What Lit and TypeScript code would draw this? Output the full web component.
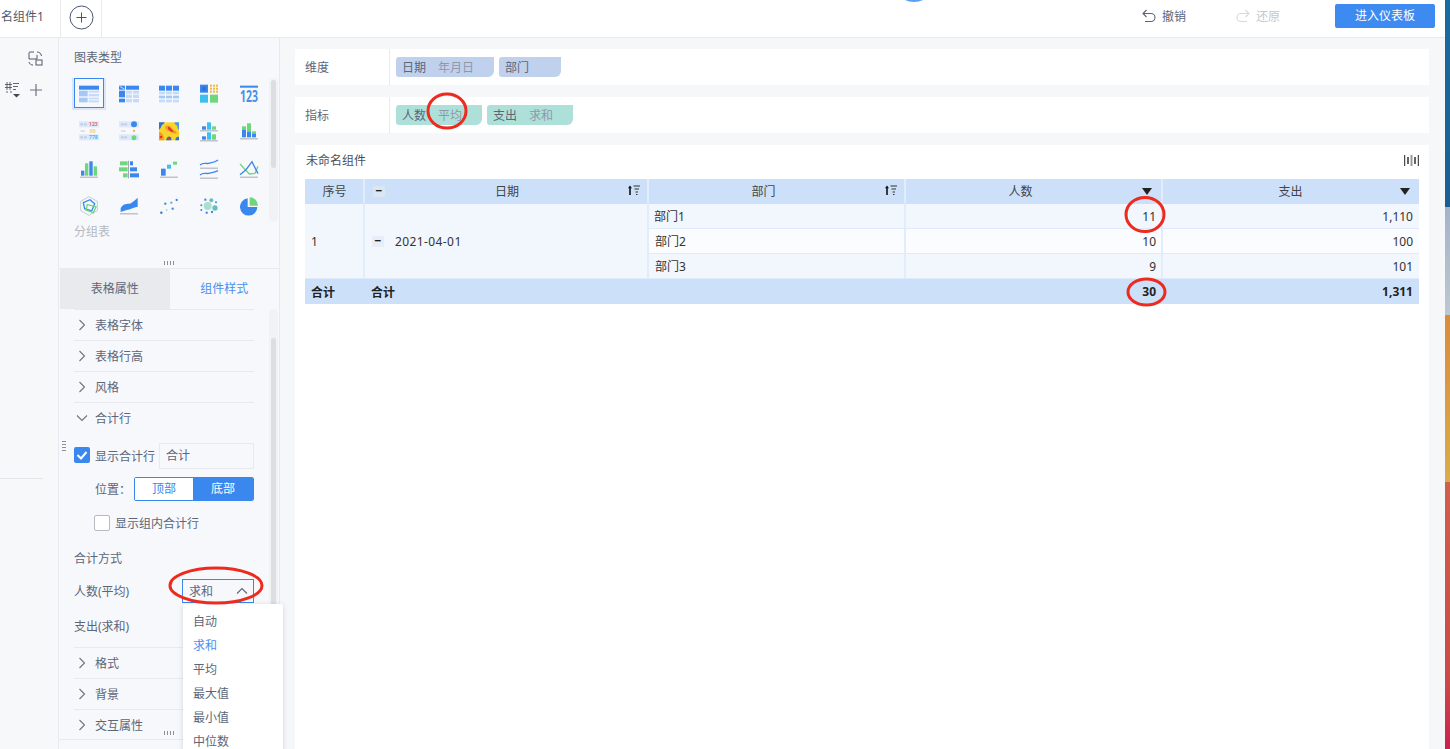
import { html, svg, css, LitElement } from "lit";
import { customElement } from "lit/decorators.js";

const BLUE = "#3a87ee";
const MID = "#a6c8f5";
const LIGHT = "#c5dbf9";
const GREEN = "#6fd67c";
const CYAN = "#3cc0f0";
const GRAY = "#a4a9b4";
const PALE = "#dce8fb";

// each icon is drawn in 60x60 units, x/y are the top left of its box
const chartIcons = [
  {
    x: 237, y: 250,
    body: svg`<rect x="237" y="255" width="60" height="12" fill=${BLUE}/>
      <rect x="237" y="270" width="26" height="17" fill=${MID}/><rect x="237" y="291" width="26" height="14" fill=${MID}/>
      <rect x="266" y="270" width="31" height="6" fill=${LIGHT}/><rect x="266" y="280" width="31" height="7" fill=${LIGHT}/>
      <rect x="266" y="291" width="31" height="5" fill=${LIGHT}/><rect x="266" y="299" width="31" height="6" fill=${LIGHT}/>`,
  },
  {
    x: 357, y: 250,
    body: svg`<rect x="357" y="255" width="18" height="12" fill=${BLUE}/><path d="M359 257 L373 265" stroke="#fff" stroke-width="2"/>
      <rect x="378" y="255" width="39" height="12" fill=${BLUE}/><rect x="357" y="270" width="18" height="20" fill=${BLUE}/><rect x="357" y="294" width="18" height="11" fill=${BLUE}/>
      <rect x="378" y="270" width="18" height="9" fill=${LIGHT}/><rect x="399" y="270" width="18" height="9" fill=${LIGHT}/>
      <rect x="378" y="282" width="18" height="10" fill=${LIGHT}/><rect x="399" y="282" width="18" height="10" fill=${LIGHT}/>
      <rect x="378" y="295" width="18" height="10" fill=${LIGHT}/><rect x="399" y="295" width="18" height="10" fill=${LIGHT}/>`,
  },
  {
    x: 477, y: 250,
    body: svg`${[477, 498, 519].map(
      (x) => svg`<rect x=${x} y="255" width="18" height="15" fill=${BLUE}/>
        <rect x=${x} y="273" width="18" height="8" fill=${LIGHT}/>
        <rect x=${x} y="285" width="18" height="8" fill=${MID}/>
        <rect x=${x} y="297" width="18" height="8" fill=${LIGHT}/>`
    )}`,
  },
  {
    x: 597, y: 250,
    body: svg`<rect x="600" y="252" width="24" height="24" fill=${BLUE}/><rect x="606" y="258" width="12" height="12" fill="#2d74d8"/>
      ${[630, 639, 648].map((x) =>
        [252, 261, 270].map((y) => svg`<rect x=${x} y=${y} width="6" height="6" fill="#f5b83c"/>`)
      )}
      <rect x="600" y="282" width="24" height="24" fill=${CYAN}/><rect x="630" y="282" width="24" height="24" fill=${GREEN}/>`,
  },
  {
    x: 717, y: 250,
    body: svg`<rect x="720" y="255" width="54" height="6" fill=${BLUE}/>
      <text x="720" y="304" font-size="46" font-weight="700" textLength="54" lengthAdjust="spacingAndGlyphs" fill="#4a8fe8">123</text>`,
  },
  {
    x: 237, y: 362,
    body: svg`<rect x="237" y="363" width="60" height="18" fill=${PALE}/><rect x="237" y="402" width="60" height="18" fill=${PALE}/>
      <rect x="241" y="369" width="8" height="6" fill="#c8ccd4"/><rect x="252" y="369" width="8" height="6" fill="#c8ccd4"/>
      <rect x="241" y="389" width="14" height="6" fill="#dfe1e6"/>
      <rect x="241" y="408" width="8" height="6" fill="#c8ccd4"/><rect x="252" y="408" width="8" height="6" fill="#c8ccd4"/>
      <text x="267" y="377" font-size="15" font-weight="700" textLength="26" fill="#ee6b6b">123</text>
      <text x="269" y="397" font-size="15" font-weight="700" textLength="18" fill="#f5cf7a">90</text>
      <text x="267" y="417" font-size="15" font-weight="700" textLength="26" fill=${CYAN}>778</text>`,
  },
  {
    x: 357, y: 362,
    body: svg`<rect x="357" y="363" width="60" height="18" fill=${PALE}/><rect x="357" y="402" width="60" height="18" fill=${PALE}/>
      <rect x="363" y="369" width="8" height="6" fill="#c8ccd4"/><rect x="373" y="369" width="8" height="6" fill="#c8ccd4"/>
      <rect x="363" y="389" width="14" height="6" fill="#dfe1e6"/>
      <rect x="363" y="408" width="8" height="6" fill="#c8ccd4"/><rect x="373" y="408" width="8" height="6" fill="#c8ccd4"/>
      <circle cx="402" cy="372" r="9" fill=${BLUE}/><circle cx="402" cy="392" r="3.5" fill="#f5b83c"/><circle cx="402" cy="412" r="7.5" fill=${GREEN}/>`,
  },
  {
    x: 477, y: 362,
    body: svg`<rect x="477" y="366" width="60" height="54" fill="#f8d52a"/>
      <path d="M477 366 H494 C492 372 486 371 484 378 C482 384 480 386 477 388 Z" fill="#2f6fd6"/>
      <path d="M524 366 H537 V388 C531 386 534 376 528 374 C525 373 524 370 524 366 Z" fill="#4c9ae0"/>
      <path d="M496 378 C504 372 514 378 518 386 C524 392 532 394 530 400 C522 402 512 396 506 392 C500 390 494 386 496 378 Z" fill="#f39a2a"/>
      <path d="M504 380 C508 378 510 384 516 388 C520 391 522 394 518 395 C512 394 502 388 504 380 Z" fill="#e5352b"/>
      <path d="M477 396 C484 394 492 402 492 420 H477 Z" fill="#f39a2a"/>
      <circle cx="483" cy="410" r="4" fill="#e5352b"/>
      <path d="M498 420 C500 410 506 406 512 410 C515 413 514 420 514 420 Z" fill="#2f6fd6"/>
      <circle cx="507" cy="415" r="3.5" fill="#e5352b"/>
      <path d="M526 420 C526 412 532 408 537 410 V420 Z" fill="#2f6fd6"/>`,
  },
  {
    x: 597, y: 362,
    body: svg`<rect x="606" y="378" width="12" height="10" fill=${BLUE}/><rect x="621" y="366" width="12" height="22" fill=${CYAN}/><rect x="636" y="378" width="12" height="10" fill=${GREEN}/>
      <rect x="600" y="390" width="54" height="3" fill=${GRAY}/>
      <rect x="606" y="408" width="12" height="10" fill=${BLUE}/><rect x="621" y="396" width="12" height="22" fill=${CYAN}/><rect x="636" y="402" width="12" height="16" fill=${GREEN}/>
      <rect x="600" y="420" width="54" height="3" fill=${GRAY}/>`,
  },
  {
    x: 717, y: 362,
    body: svg`<rect x="726" y="387" width="12" height="24" fill=${BLUE}/><rect x="726" y="378" width="12" height="9" fill=${GREEN}/>
      <rect x="741" y="393" width="12" height="18" fill=${BLUE}/><rect x="741" y="369" width="12" height="24" fill=${GREEN}/>
      <rect x="756" y="399" width="12" height="12" fill=${BLUE}/><rect x="756" y="393" width="12" height="6" fill=${GREEN}/>
      <rect x="720" y="414" width="54" height="3" fill=${GRAY}/>`,
  },
  {
    x: 237, y: 475,
    body: svg`<rect x="243" y="510" width="10" height="15" fill=${BLUE}/><rect x="255" y="488" width="10" height="37" fill=${GREEN}/>
      <rect x="268" y="482" width="10" height="43" fill=${BLUE}/><rect x="281" y="497" width="10" height="28" fill=${GREEN}/>
      <rect x="240" y="528" width="54" height="3" fill=${GRAY}/>`,
  },
  {
    x: 357, y: 475,
    body: svg`<rect x="360" y="482" width="23" height="12" fill=${GREEN}/><rect x="357" y="500" width="26" height="12" fill=${GREEN}/><rect x="369" y="518" width="14" height="12" fill=${GREEN}/>
      <rect x="384" y="480" width="3" height="53" fill=${GRAY}/>
      <rect x="390" y="482" width="9" height="12" fill=${BLUE}/><rect x="390" y="500" width="21" height="12" fill=${BLUE}/><rect x="390" y="518" width="27" height="12" fill=${BLUE}/>`,
  },
  {
    x: 477, y: 475,
    body: svg`<rect x="483" y="504" width="14" height="21" fill=${BLUE}/><rect x="501" y="492" width="12" height="12" fill=${CYAN}/><rect x="519" y="483" width="12" height="9" fill=${GREEN}/>
      <rect x="480" y="528" width="54" height="3" fill=${GRAY}/>`,
  },
  {
    x: 597, y: 475,
    body: svg`<path d="M600 493 C610 484 618 490 626 488 S644 486 654 478" fill="none" stroke=${BLUE} stroke-width="4"/>
      <rect x="600" y="501" width="54" height="3" fill=${GRAY}/>
      <path d="M600 523 C610 514 618 520 626 518 S644 516 654 510" fill="none" stroke=${BLUE} stroke-width="4"/>
      <rect x="600" y="531" width="54" height="3" fill=${GRAY}/>`,
  },
  {
    x: 717, y: 475,
    body: svg`<polyline points="720,490 748,520 765,518 774,497" fill="none" stroke=${GREEN} stroke-width="4"/>
      <polyline points="720,522 738,507 756,483 774,519" fill="none" stroke=${BLUE} stroke-width="4"/>
      <rect x="720" y="528" width="54" height="3" fill=${GRAY}/>`,
  },
  {
    x: 237, y: 590,
    body: svg`<polygon points="267,592 292,606 292,634 267,648 242,634 242,606" fill="none" stroke="#c8ccd4" stroke-width="3"/>
      <polygon points="250,610 270,601 284,613 275,635 254,628" fill="none" stroke=${BLUE} stroke-width="4"/>
      <polygon points="262,616 288,622 280,640 258,632" fill="none" stroke=${GREEN} stroke-width="4"/>`,
  },
  {
    x: 357, y: 590,
    body: svg`<path d="M362 626 C375 606 385 618 395 610 S405 603 413 595 V622 C400 624 390 630 380 632 L362 638 Z" fill=${BLUE}/>
      <rect x="360" y="642" width="54" height="3" fill=${GRAY}/>`,
  },
  {
    x: 477, y: 590,
    body: svg`<circle cx="484" cy="640" r="3.5" fill="#2d6fc8"/><circle cx="500" cy="632" r="3" fill="#a8e0c8"/><circle cx="496" cy="613" r="3.5" fill=${BLUE}/>
      <circle cx="514" cy="610" r="3.5" fill="#66bfc0"/><circle cx="518" cy="628" r="3.5" fill=${BLUE}/><circle cx="530" cy="602" r="3.5" fill=${BLUE}/>`,
  },
  {
    x: 597, y: 590,
    body: svg`<circle cx="623" cy="620" r="12" fill="#a8e0d0"/><circle cx="645" cy="626" r="8" fill="#66bfc0"/><circle cx="634" cy="603" r="6" fill="#66bfc0"/>
      <circle cx="616" cy="601" r="3.5" fill=${BLUE}/><circle cx="604" cy="618" r="3" fill=${BLUE}/><circle cx="604" cy="632" r="3" fill=${BLUE}/>
      <circle cx="620" cy="640" r="3.5" fill=${BLUE}/><circle cx="636" cy="638" r="3.5" fill=${BLUE}/><circle cx="648" cy="609" r="3" fill=${BLUE}/>`,
  },
  {
    x: 717, y: 590,
    body: svg`<path d="M743 597 A26 26 0 1 0 772 623 H743 Z" fill=${BLUE}/><path d="M749 594 A25 25 0 0 1 774 619 H749 Z" fill=${GREEN}/>`,
  },
];

const chevronRight = html`<svg class="chev" viewBox="0 0 12 12"><path d="M3.5 1 L8.5 6 L3.5 11" fill="none" stroke="#6b7484" stroke-width="1.1"/></svg>`;
const chevronDown = html`<svg class="chev" viewBox="0 0 12 12"><path d="M1 3.5 L6 8.5 L11 3.5" fill="none" stroke="#6b7484" stroke-width="1.1"/></svg>`;
const sortIcon = html`<svg class="sort" viewBox="0 0 12 10"><path d="M2 10 V2.5" stroke="#111" stroke-width="1.6"/><path d="M0 3.2 L2 .4 L4 3.2 Z" fill="#111"/><path d="M5.5 1 H12 M6.5 4 H11 M7.5 7 H10 M8 9.5 H9.5" stroke="#333" stroke-width="1"/></svg>`;
const sortDown = html`<svg class="tri" viewBox="0 0 10 7"><path d="M0 0 H10 L5 7 Z" fill="#222"/></svg>`;

const statRows = [
  { dept: "部门1", n: "11", pay: "1,110", cls: "" },
  { dept: "部门2", n: "10", pay: "100", cls: "alt" },
  { dept: "部门3", n: "9", pay: "101", cls: "" },
];

@customElement("app-root")
export class AppRoot extends LitElement {
  static styles = css`
    :host {
      display: flex;
      position: relative;
      height: 749px;
      overflow: hidden;
      font-family: "Noto Sans", "Noto Sans CJK SC", sans-serif;
      font-size: 12px;
      color: #5c6678;
    }
    .app {
      width: 1445px;
      display: flex;
      flex-direction: column;
      background: #f6f7f9;
    }
    .wallpaper {
      width: 5px;
      background: linear-gradient(
        to bottom,
        #1a6c9e 0,
        #1b5e94 207px,
        #a3b3ca 207px,
        #bcc8cf 315px,
        #d98c3a 315px,
        #d9ac4a 482px,
        #d0604a 482px,
        #ca4a48 680px,
        #c9224f 749px
      );
    }
    .topbar {
      height: 38px;
      box-sizing: border-box;
      background: #fff;
      border-bottom: 1px solid #e8eaee;
      display: flex;
      align-items: center;
      flex: none;
    }
    .tab-name {
      width: 61px;
      height: 37px;
      box-sizing: border-box;
      padding-left: 1px;
      line-height: 34px;
      border-right: 1px solid #e8eaee;
      color: #4f5868;
      white-space: nowrap;
      overflow: hidden;
    }
    .tab-add {
      width: 41px;
      height: 37px;
      box-sizing: border-box;
      border-right: 1px solid #e8eaee;
      display: flex;
      align-items: center;
      justify-content: center;
    }
    .tab-add svg {
      width: 25px;
      height: 25px;
      margin-top: -3px;
    }
    .spacer {
      flex: 1;
    }
    .history {
      display: flex;
      align-items: center;
      gap: 6px;
      margin-right: 50px;
      margin-top: -5px;
    }
    .history svg {
      width: 14px;
      height: 14px;
    }
    .history.off {
      color: #c3c8d0;
      margin-right: 55px;
    }
    .enter {
      width: 100px;
      height: 24px;
      margin-right: 10px;
      margin-top: -5px;
      background: #3d8af0;
      border-radius: 2px;
      color: #fff;
      text-align: center;
      line-height: 24px;
    }
    .blip {
      position: absolute;
      left: 902px;
      top: -10px;
      width: 24px;
      height: 12px;
      border-radius: 50%;
      background: #5b9ff0;
    }
    .body {
      flex: 1;
      display: flex;
      min-height: 0;
    }
    .rail {
      width: 58px;
      flex: none;
      display: flex;
      flex-direction: column;
      background: #f7f8fa;
    }
    .rail-swap {
      width: 15px;
      height: 15px;
      margin: 13px 0 0 28px;
    }
    .rail-row {
      display: flex;
      align-items: center;
      margin: 16px 0 0 5px;
      gap: 10px;
    }
    .rail-row svg {
      display: block;
    }
    .rail-line {
      margin-top: 380px;
      width: 43px;
      height: 1px;
      background: #e4e6ea;
    }
    .panel {
      width: 222px;
      box-sizing: border-box;
      flex: none;
      position: relative;
      background: #f7f8fb;
      border-left: 1px solid #e8eaee;
      border-right: 1px solid #e8eaee;
      display: flex;
      flex-direction: column;
    }
    .types {
      height: 231px;
      box-sizing: border-box;
      flex: none;
      position: relative;
      border-bottom: 1px solid #e8eaee;
      padding: 12px 0 0 15px;
    }
    .types h4 {
      margin: 0;
      height: 16px;
      line-height: 16px;
      font-size: 12px;
      font-weight: 400;
      color: #5c6678;
    }
    .grid {
      display: grid;
      grid-template-columns: repeat(5, 40px);
      grid-auto-rows: 37.5px;
      margin: 9px 0 0 -5px;
    }
    .cell {
      display: flex;
      align-items: center;
      justify-content: center;
      position: relative;
    }
    .cell svg {
      width: 20px;
      height: 20px;
      overflow: visible;
      display: block;
    }
    .cell.selected::before {
      content: "";
      position: absolute;
      left: 5px;
      top: 3px;
      width: 30px;
      height: 30px;
      box-sizing: border-box;
      border: 1px solid #3a87ee;
      box-shadow: 0 0 0 2px #dbe7f8;
      clip-path: inset(0 -2px -2px -2px);
    }
    .hint {
      color: #b4b9c2;
      line-height: 16px;
      margin-top: -1px;
    }
    .track {
      position: absolute;
      left: 210px;
      width: 9px;
      background: #f1f2f4;
      border-radius: 5px;
    }
    .thumb {
      position: absolute;
      left: 2px;
      width: 5px;
      background: #dcdee2;
      border-radius: 3px;
    }
    .dots {
      position: absolute;
      width: 12px;
      height: 4px;
      background-image: radial-gradient(circle, #8b919c 0.7px, transparent 0.9px);
      background-size: 3px 2px;
    }
    .dots.v {
      width: 4px;
      height: 12px;
      background-size: 2px 3px;
    }
    .tabs {
      height: 40px;
      flex: none;
      display: flex;
      line-height: 40px;
      text-align: center;
      margin-left: 1px;
    }
    .tabs div {
      width: 110px;
      color: #4a90f0;
    }
    .tabs .on {
      background: #e8eaee;
      color: #5c6678;
    }
    .styles {
      height: 431px;
      box-sizing: border-box;
      flex: none;
      position: relative;
      padding: 0 25px 0 15px;
      border-bottom: 1px solid #e8eaee;
    }
    .acc {
      height: 31px;
      box-sizing: border-box;
      border-top: 1px solid #e8eaee;
      display: flex;
      align-items: center;
      padding-left: 2px;
      gap: 7px;
    }
    .chev {
      width: 12px;
      height: 12px;
      flex: none;
    }
    .line {
      display: flex;
      align-items: center;
    }
    .show-total {
      margin-top: 10px;
      height: 26px;
    }
    .check {
      width: 16px;
      height: 16px;
      flex: none;
      box-sizing: border-box;
      border-radius: 2px;
    }
    .check.on {
      background: #3a87ee;
      margin: 0 5px 2px 0;
    }
    .check.off {
      border: 1px solid #b5bac4;
      background: #fff;
      margin: 0 5px 0 20px;
    }
    .total-name {
      margin-left: 4px;
      width: 95px;
      height: 26px;
      box-sizing: border-box;
      border: 1px solid #e8eaee;
      padding-left: 6px;
      line-height: 24px;
    }
    .place {
      margin: 8px 0 0 21px;
      height: 24px;
    }
    .place label {
      width: 39px;
    }
    .seg {
      display: flex;
      width: 120px;
      height: 24px;
      box-sizing: border-box;
      line-height: 22px;
      text-align: center;
      border: 1px solid #3a87ee;
      border-radius: 2px;
      overflow: hidden;
    }
    .seg div {
      width: 58px;
      background: #fff;
      color: #3a87ee;
    }
    .seg .on {
      flex: 1;
      background: #3a87ee;
      color: #fff;
    }
    .inner {
      margin-top: 14px;
      height: 16px;
    }
    .sum-title {
      margin-top: 18px;
      line-height: 20px;
    }
    .sum {
      margin-top: 11px;
      height: 24px;
      justify-content: space-between;
    }
    .sum-title + .sum {
      margin-top: 10px;
    }
    .select {
      width: 72px;
      height: 24px;
      box-sizing: border-box;
      border: 1px solid #3a87ee;
      padding: 0 5px 0 6px;
      display: flex;
      align-items: center;
      justify-content: space-between;
    }
    .select svg {
      width: 12px;
      height: 12px;
    }
    .sum-last {
      margin-bottom: 9px;
    }
    .menu {
      position: absolute;
      left: 183px;
      top: 604px;
      width: 100px;
      height: 160px;
      padding-top: 6px;
      box-sizing: border-box;
      background: #fff;
      border-radius: 2px;
      box-shadow: 0 1px 5px rgba(60, 70, 90, 0.2);
    }
    .menu div {
      height: 24px;
      line-height: 24px;
      padding-left: 10px;
    }
    .menu .on {
      color: #4a90f0;
    }
    .main {
      flex: 1;
      min-width: 0;
      display: flex;
      flex-direction: column;
      gap: 12px;
      padding: 11px 16px 0 15px;
    }
    .well {
      height: 36px;
      flex: none;
      background: #fff;
      display: flex;
      align-items: center;
    }
    .well-label {
      width: 95px;
      height: 36px;
      box-sizing: border-box;
      line-height: 38px;
      padding-left: 10px;
      border-right: 1px solid #e8eaee;
      margin-right: 6px;
    }
    .pill {
      height: 20px;
      line-height: 22px;
      padding-left: 6px;
      margin-right: 5px;
      box-sizing: border-box;
      border-radius: 3px 0 6px 3px;
      display: flex;
      color: #5c6678;
    }
    .pill span {
      margin-left: 12px;
      color: #8f98a8;
    }
    .pill.dim {
      background: #c0d1ee;
    }
    .pill.num {
      background: #aee0da;
    }
    .w98 {
      width: 98px;
    }
    .w62 {
      width: 62px;
    }
    .w86 {
      width: 86px;
    }
    .card {
      flex: 1;
      background: #fff;
      padding: 5px 10px 0;
    }
    .card-head {
      height: 29px;
      padding-left: 1px;
      display: flex;
      justify-content: space-between;
      color: #4a4f5a;
      line-height: 22px;
    }
    .card-head svg {
      width: 15px;
      height: 11px;
      margin: 5px 0 0;
    }
    table {
      width: 1114px;
      table-layout: fixed;
      border-collapse: separate;
      border-spacing: 0;
      color: #333;
    }
    th,
    td {
      height: 25px;
      box-sizing: border-box;
      padding: 0 5px;
      font-weight: 400;
      border-right: 2px solid #e2ecfb;
      border-bottom: 1px solid #dfeafb;
      background: #f2f6fd;
      white-space: nowrap;
    }
    tr.alt td {
      background: #fafcff;
    }
    th {
      background: #cde0f9;
      border-color: #e2edfb;
      border-bottom-color: #cde0f9;
      text-align: center;
      color: #444;
      position: relative;
    }
    th.pad {
      padding: 0 31px 0 5px;
    }
    th.both {
      padding: 0 29px 0 31px;
    }
    th:first-child,
    td:first-child {
      padding-left: 6px;
    }
    th:last-child,
    td:last-child {
      border-right: 0;
      padding-right: 6px;
    }
    td.num {
      text-align: right;
    }
    tr.total td {
      background: #cde0f9;
      border-bottom: 0;
      border-right-color: #cde0f9;
      font-weight: 700;
      color: #222;
    }
    td.dated {
      padding-left: 6px;
    }
    .fold {
      display: inline-block;
      width: 12px;
      height: 11px;
      line-height: 9px;
      text-align: center;
      background: #dde8f7;
      color: #222;
      margin-right: 11px;
      font-weight: 700;
    }
    th .fold {
      position: absolute;
      left: 8px;
      top: 7px;
      background: #dbe6f5;
    }
    td .fold {
      background: #e8eef8;
      margin-left: 1px;
      vertical-align: 1px;
    }
    .sort {
      position: absolute;
      right: 7px;
      top: 6px;
      width: 12px;
      height: 10px;
    }
    .tri {
      position: absolute;
      right: 9px;
      top: 9px;
      width: 10px;
      height: 7px;
    }
    .date {
      letter-spacing: 0.4px;
    }
    .marks {
      position: absolute;
      left: 0;
      top: 0;
      width: 1450px;
      height: 749px;
      pointer-events: none;
    }
  `;

  renderIcon(icon: { x: number; y: number; body: unknown }) {
    return html`<svg viewBox="${icon.x} ${icon.y} 60 60">${icon.body}</svg>`;
  }

  render() {
    return html`<div class="app">
        <div class="topbar">
          <div class="tab-name">名组件1</div>
          <div class="tab-add">
            <svg viewBox="0 0 25 25">
              <circle cx="12.5" cy="12.5" r="11.5" fill="none" stroke="#4a5568" />
              <path d="M12.5 7.5 V17.5 M7.5 12.5 H17.5" stroke="#4a5568" />
            </svg>
          </div>
          <div class="spacer"></div>
          <div class="history">
            <svg viewBox="0 0 14 14"><path d="M4.5 1 L1 4.5 L4.5 8 M1 4.5 H9 A4 4 0 0 1 9 12.5 H3" fill="none" stroke="#5c6678" stroke-width="1.1" /></svg>
            撤销
          </div>
          <div class="history off">
            <svg viewBox="0 0 14 14"><path d="M9.5 1 L13 4.5 L9.5 8 M13 4.5 H5 A4 4 0 0 0 5 12.5 H11" fill="none" stroke="#d5d9e0" stroke-width="1.1" /></svg>
            还原
          </div>
          <div class="enter">进入仪表板</div>
        </div>
        <div class="body">
          <div class="rail">
            <svg class="rail-swap" viewBox="0 0 15 15">
              <path d="M6 1 H2 A1 1 0 0 0 1 2 V8 H9 V4" fill="none" stroke="#4f5868" />
              <rect x="8" y="9" width="6" height="5" fill="none" stroke="#4f5868" />
              <path d="M9 1 C11 1 13 2 13.5 5 M1 11 C1.5 13 3 14 5 14" fill="none" stroke="#4f5868" />
            </svg>
            <div class="rail-row">
              <svg width="15" height="16" viewBox="0 0 15 16">
                <path d="M2 0 V8 M5 0 V8 M0 2.5 H7 M0 5.5 H7 M8 1.5 H14 M8 4.5 H13 M8 7.5 H11 M1 10 H3 M5 10 H7" stroke="#4f5868" stroke-width=".9" />
                <path d="M8 12 H15 L11.5 15.5 Z" fill="#3f4856" />
              </svg>
              <svg width="12" height="12" viewBox="0 0 12 12"><path d="M6 0 V12 M0 6 H12" stroke="#6b7484" stroke-width="1.2" /></svg>
            </div>
            <div class="rail-line"></div>
          </div>
          <div class="panel">
            <div class="types">
              <h4>图表类型</h4>
              <div class="grid">
                ${chartIcons.map(
                  (icon, i) => html`<div class="cell ${i === 0 ? "selected" : ""}">${this.renderIcon(icon)}</div>`
                )}
              </div>
              <div class="hint">分组表</div>
              <div class="track" style="top:40px;height:144px"><div class="thumb" style="top:2px;height:88px"></div></div>
              <div class="dots" style="left:104px;top:223px"></div>
            </div>
            <div class="tabs">
              <div class="on">表格属性</div>
              <div>组件样式</div>
            </div>
            <div class="styles">
              <div class="acc">${chevronRight}表格字体</div>
              <div class="acc">${chevronRight}表格行高</div>
              <div class="acc">${chevronRight}风格</div>
              <div class="acc">${chevronDown}合计行</div>
              <div class="line show-total">
                <div class="check on">
                  <svg viewBox="0 0 16 16"><path d="M3.5 8 L7 11.5 L12.5 5" fill="none" stroke="#fff" stroke-width="2" /></svg>
                </div>
                显示合计行
                <div class="total-name">合计</div>
              </div>
              <div class="line place">
                <label>位置：</label>
                <div class="seg">
                  <div>顶部</div>
                  <div class="on">底部</div>
                </div>
              </div>
              <div class="line inner"><div class="check off"></div>显示组内合计行</div>
              <div class="sum-title">合计方式</div>
              <div class="line sum">
                人数(平均)
                <div class="select">
                  求和
                  <svg viewBox="0 0 12 12"><path d="M1 8.5 L6 3.5 L11 8.5" fill="none" stroke="#5c6678" stroke-width="1.1" /></svg>
                </div>
              </div>
              <div class="line sum sum-last">支出(求和)</div>
              <div class="acc">${chevronRight}格式</div>
              <div class="acc">${chevronRight}背景</div>
              <div class="acc">${chevronRight}交互属性</div>
              <div class="track" style="top:0;height:431px"><div class="thumb" style="top:29px;height:268px"></div></div>
              <div class="dots v" style="left:3px;top:131px"></div>
              <div class="dots" style="left:104px;top:422px"></div>
            </div>
          </div>
          <div class="main">
            <div class="well">
              <div class="well-label">维度</div>
              <div class="pill dim w98">日期<span>年月日</span></div>
              <div class="pill dim w62">部门</div>
            </div>
            <div class="well">
              <div class="well-label">指标</div>
              <div class="pill num w86">人数<span>平均</span></div>
              <div class="pill num w86">支出<span>求和</span></div>
            </div>
            <div class="card">
              <div class="card-head">
                未命名组件
                <svg viewBox="0 0 15 11">
                  <path d="M.7 0 V11 M14.3 0 V11" stroke="#222" />
                  <path d="M4 2 V9 M11 2 V9" stroke="#222" stroke-width="1.4" />
                  <path d="M7.5 0 V11" stroke="#999" stroke-width="2" />
                </svg>
              </div>
              <table>
                <colgroup>
                  <col style="width:60px" />
                  <col style="width:284px" />
                  <col style="width:257px" />
                  <col style="width:257px" />
                  <col style="width:256px" />
                </colgroup>
                <thead>
                  <tr>
                    <th>序号</th>
                    <th class="both"><span class="fold">−</span>日期${sortIcon}</th>
                    <th class="pad">部门${sortIcon}</th>
                    <th class="pad">人数${sortDown}</th>
                    <th class="pad">支出${sortDown}</th>
                  </tr>
                </thead>
                <tbody>
                  ${statRows.map(
                    (row, i) => html`<tr class=${row.cls}>
                      ${i === 0
                        ? html`<td rowspan="3">1</td>
                            <td rowspan="3" class="dated"><span class="fold">−</span><span class="date">2021-04-01</span></td>`
                        : ""}
                      <td>${row.dept}</td>
                      <td class="num">${row.n}</td>
                      <td class="num">${row.pay}</td>
                    </tr>`
                  )}
                  <tr class="total">
                    <td>合计</td>
                    <td class="dated">合计</td>
                    <td></td>
                    <td class="num">30</td>
                    <td class="num">1,311</td>
                  </tr>
                </tbody>
              </table>
            </div>
          </div>
        </div>
      </div>
      <div class="wallpaper"></div>
      <div class="blip"></div>
      <div class="menu">
        <div>自动</div>
        <div class="on">求和</div>
        <div>平均</div>
        <div>最大值</div>
        <div>最小值</div>
        <div>中位数</div>
      </div>
      <svg class="marks" viewBox="0 0 1450 749">
        <g fill="none" stroke="#ee2a1e" stroke-width="3">
          <ellipse cx="216" cy="585.5" rx="46" ry="17.5" />
          <ellipse cx="447" cy="111" rx="19" ry="17" />
          <ellipse cx="1145" cy="214.5" rx="19" ry="17" />
          <ellipse cx="1146.5" cy="292" rx="18.5" ry="13" />
        </g>
      </svg>`;
  }
}
